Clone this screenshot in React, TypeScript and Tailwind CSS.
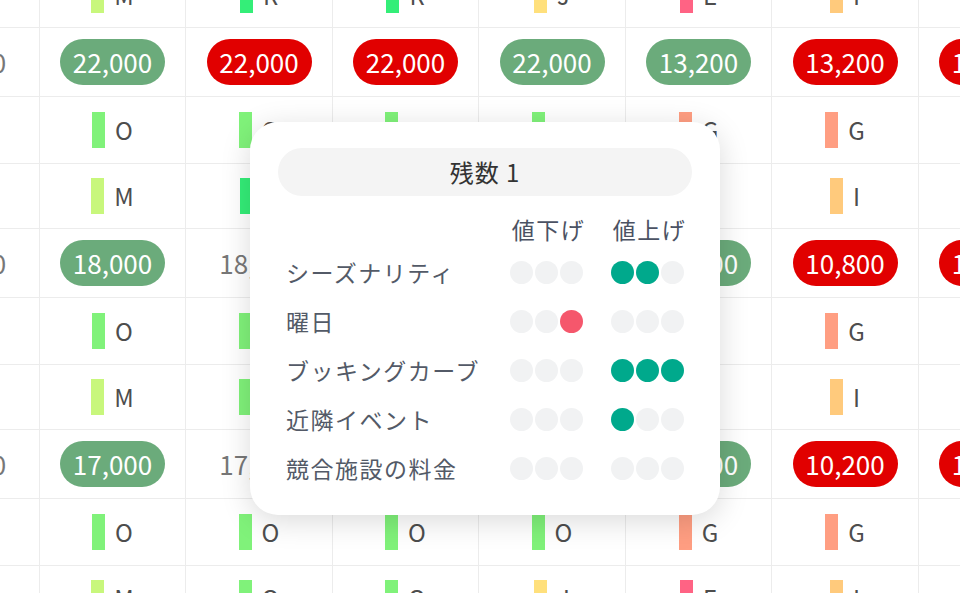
const COLS = ["w-[146px]", "w-[146px]", "w-[147px]", "w-[146px]", "w-[147px]", "w-[146px]", "w-[147px]", "w-[146px]"];

type Price = { v: string; kind: "green" | "red" | "plain" };
type Mark = { l: string; c: string };

const BAR: Record<string, string> = {
  O: "bg-[#80f27a]",
  M: "bg-[#c8f77c]",
  R: "bg-[#34ee78]",
  J: "bg-[#ffe07c]",
  E: "bg-[#ff6384]",
  I: "bg-[#ffca7c]",
  G: "bg-[#ff9e82]",
};

const m = (l: string): Mark => ({ l, c: BAR[l] });

const typeA = ["", "M", "R", "R", "J", "E", "I", ""].map(m);
const typeO = ["", "O", "O", "O", "O", "G", "G", ""].map(m);
const typeM = ["", "M", "O", "O", "J", "E", "I", ""].map(m);

const p = (v: string, kind: Price["kind"]): Price => ({ v, kind });

const priceRows: Price[][] = [
  [p("22,000", "plain"), p("22,000", "green"), p("22,000", "red"), p("22,000", "red"), p("22,000", "green"), p("13,200", "green"), p("13,200", "red"), p("13,200", "red")],
  [p("18,000", "plain"), p("18,000", "green"), p("18,000", "plain"), p("18,000", "plain"), p("18,000", "green"), p("10,800", "green"), p("10,800", "red"), p("10,800", "red")],
  [p("17,000", "plain"), p("17,000", "green"), p("17,000", "plain"), p("17,000", "plain"), p("17,000", "green"), p("10,200", "green"), p("10,200", "red"), p("10,200", "red")],
];

function PriceRow({ cells }: { cells: Price[] }) {
  return (
    <div className="flex h-[69px]">
      {cells.map((c, i) => (
        <div key={i} className={`${COLS[i]} shrink-0 flex items-center justify-center border-r border-b border-[#ececec]`}>
          {c.kind === "plain" ? (
            <span className="text-[26px] leading-none text-[#777777]">{c.v}</span>
          ) : (
            <span
              className={`w-[105px] h-[46px] rounded-full flex items-center justify-center text-white text-[26px] leading-none ${
                c.kind === "green" ? "bg-[#6bab7b]" : "bg-[#e10000]"
              }`}
            >
              {c.v}
            </span>
          )}
        </div>
      ))}
    </div>
  );
}

function MarkRow({ cells, tall }: { cells: Mark[]; tall?: boolean }) {
  return (
    <div className={`flex ${tall ? "h-[67px]" : "h-[65px]"}`}>
      {cells.map((c, i) => (
        <div key={i} className={`${COLS[i]} shrink-0 flex items-center justify-center gap-[10px] border-r border-b border-[#ececec]`}>
          {c.l && (
            <>
              <span className={`w-[13px] h-[36px] ${c.c}`} />
              <span className="text-[24px] leading-none text-[#4d4d4d]">{c.l}</span>
            </>
          )}
        </div>
      ))}
    </div>
  );
}

const factors: { name: string; down: number; downRed?: boolean; up: number }[] = [
  { name: "シーズナリティ", down: 0, up: 2 },
  { name: "曜日", down: 1, downRed: true, up: 0 },
  { name: "ブッキングカーブ", down: 0, up: 3 },
  { name: "近隣イベント", down: 0, up: 1 },
  { name: "競合施設の料金", down: 0, up: 0 },
];

function Dots({ on, fromRight, color }: { on: number; fromRight?: boolean; color: string }) {
  return (
    <div className="flex gap-[2px]">
      {[0, 1, 2].map((i) => {
        const lit = fromRight ? i >= 3 - on : i < on;
        return <span key={i} className={`w-[23px] h-[23px] rounded-full ${lit ? color : "bg-[#f1f2f3]"}`} />;
      })}
    </div>
  );
}

function Popover() {
  return (
    <div className="absolute left-[250px] top-[122px] w-[470px] h-[393px] bg-white rounded-[28px] shadow-[0_6px_30px_rgba(0,0,0,0.15)] px-[28px] pt-[26px]">
      <div className="h-[48px] rounded-full bg-[#f4f4f4] flex items-center justify-center text-[24px] tracking-[1px] text-[#333333]">
        残数 1
      </div>
      <div className="px-2 mt-[14px] grid grid-cols-[1fr_73px_73px] grid-rows-[38px_repeat(5,49px)] gap-x-[28px] items-center text-[23px] tracking-[1.5px] leading-none">
        <div />
        <div className="flex justify-center text-[#4b5263] whitespace-nowrap -mr-[4px]">値下げ</div>
        <div className="flex justify-center text-[#4b5263] whitespace-nowrap -mr-[4px]">値上げ</div>
        {factors.map((f) => (
          <div key={f.name} className="contents">
            <div className="text-[#535a67] whitespace-nowrap">{f.name}</div>
            <Dots on={f.down} fromRight color={f.downRed ? "bg-[#f5576c]" : "bg-[#00a98c]"} />
            <Dots on={f.up} color="bg-[#00a98c]" />
          </div>
        ))}
      </div>
    </div>
  );
}

export default function App() {
  return (
    <div className="relative w-[960px] h-[600px] bg-white overflow-hidden font-['Noto_Sans_CJK_JP',sans-serif]">
      <div className="h-[593px] overflow-hidden">
        <div className="-ml-[106px] -mt-[37px] flex flex-col">
          <MarkRow cells={typeA} />
          <PriceRow cells={priceRows[0]} />
          <MarkRow cells={typeO} tall />
          <MarkRow cells={typeA} />
          <PriceRow cells={priceRows[1]} />
          <MarkRow cells={typeO} tall />
          <MarkRow cells={typeM} />
          <PriceRow cells={priceRows[2]} />
          <MarkRow cells={typeO} tall />
          <MarkRow cells={typeM} />
        </div>
      </div>
      <Popover />
    </div>
  );
}
